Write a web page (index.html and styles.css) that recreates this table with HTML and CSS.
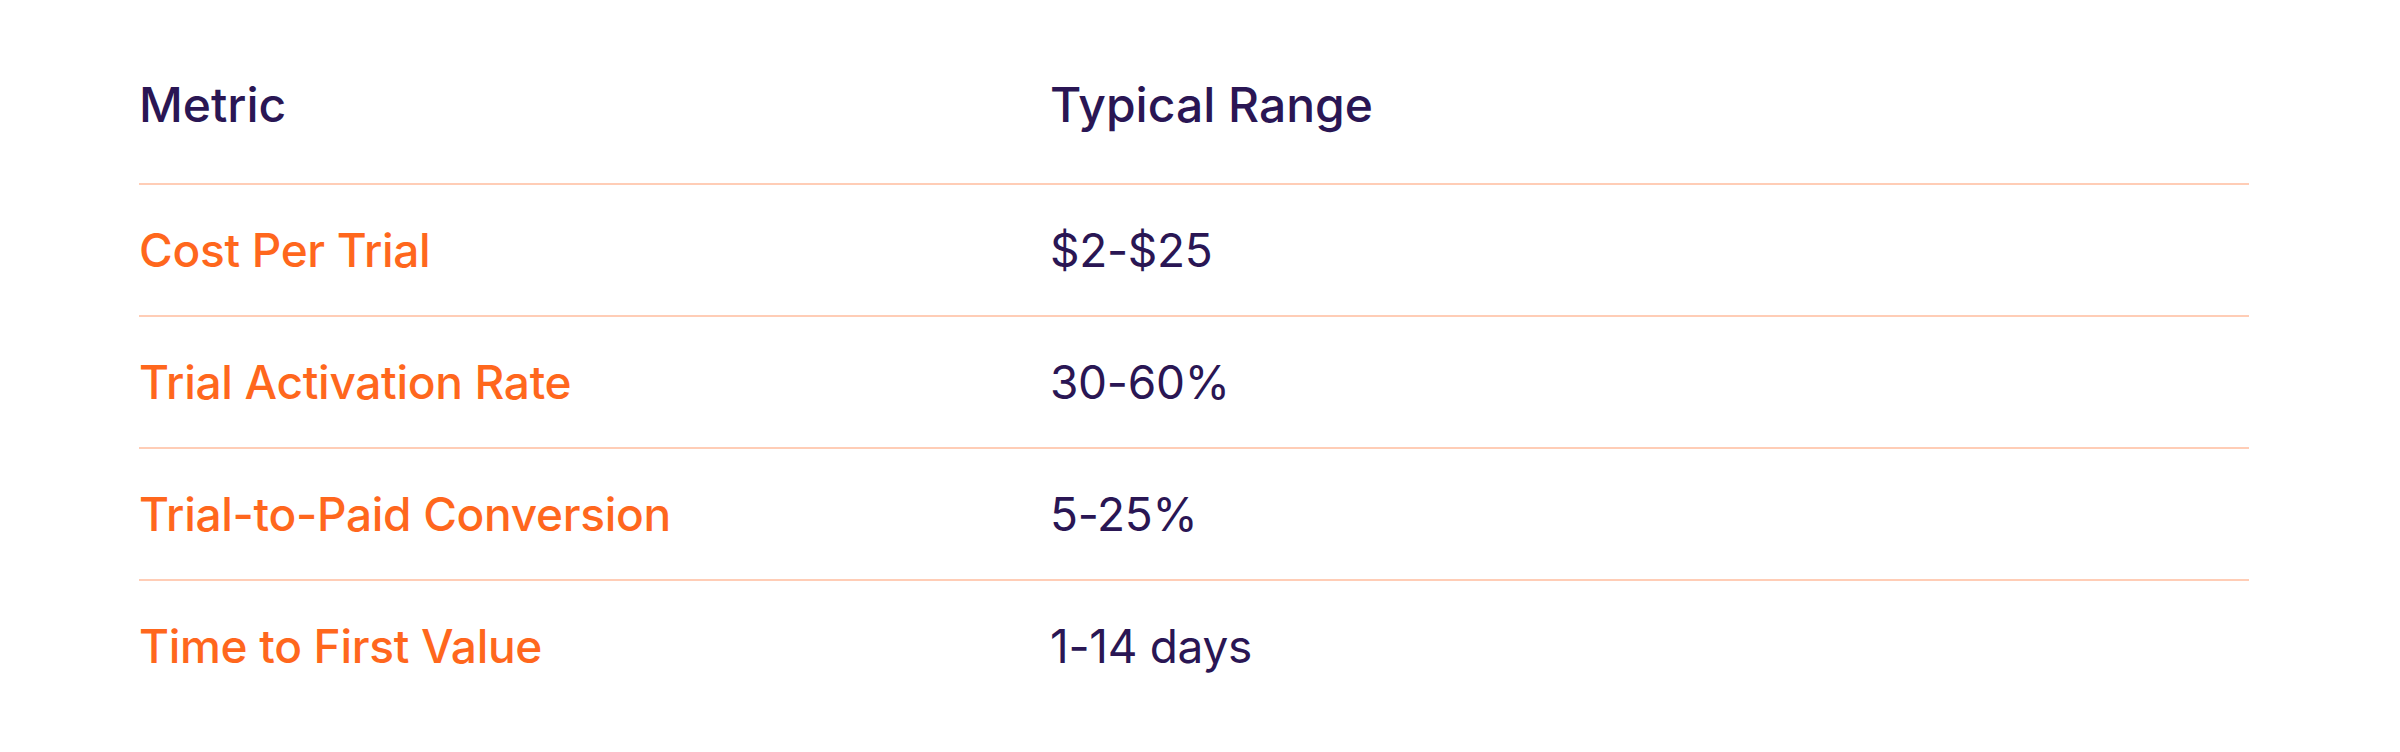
FILE: index.html
```html
<!DOCTYPE html>
<html lang="en">
<head>
<meta charset="utf-8">
<title>Trial Metrics</title>
<link rel="stylesheet" href="styles.css">
</head>
<body>
<table class="metrics">
  <thead>
    <tr>
      <th class="col-metric">Metric</th>
      <th class="col-range">Typical Range</th>
    </tr>
  </thead>
  <tbody>
    <tr><td class="metric">Cost Per Trial</td><td class="range">$2-$25</td></tr>
    <tr><td class="metric">Trial Activation Rate</td><td class="range">30-60%</td></tr>
    <tr><td class="metric">Trial-to-Paid Conversion</td><td class="range">5-25%</td></tr>
    <tr><td class="metric">Time to First Value</td><td class="range">1-14 days</td></tr>
  </tbody>
</table>
</body>
</html>
```

FILE: styles.css
```css
html, body {
  margin: 0;
  padding: 0;
  background: #ffffff;
}

body {
  font-family: Inter, "Liberation Sans", sans-serif;
  font-size: 46px;
  line-height: 55px;
}

.metrics {
  margin-left: 139px;
  width: 2110px;
  border-collapse: collapse;
  table-layout: fixed;
}

.metrics th,
.metrics td {
  padding: 0;
  text-align: left;
  vertical-align: middle;
}

.metrics th {
  color: #2a1654;
  font-size: 48px;
  font-weight: 500;
  padding-top: 77px;
  padding-bottom: 51px;
  border-bottom: 2px solid #ffcdb6;
}

.col-metric {
  width: 911px;
}

.metrics td {
  height: 130px;
  padding: 0;
  letter-spacing: -0.3px;
}

.metrics tbody tr {
  border-bottom: 2px solid #ffcdb6;
}

.metrics tbody tr:last-child {
  border-bottom: none;
}

.metric {
  color: #ff671d;
  font-weight: 500;
}

.range {
  color: #2a1654;
  font-weight: 400;
}
```
